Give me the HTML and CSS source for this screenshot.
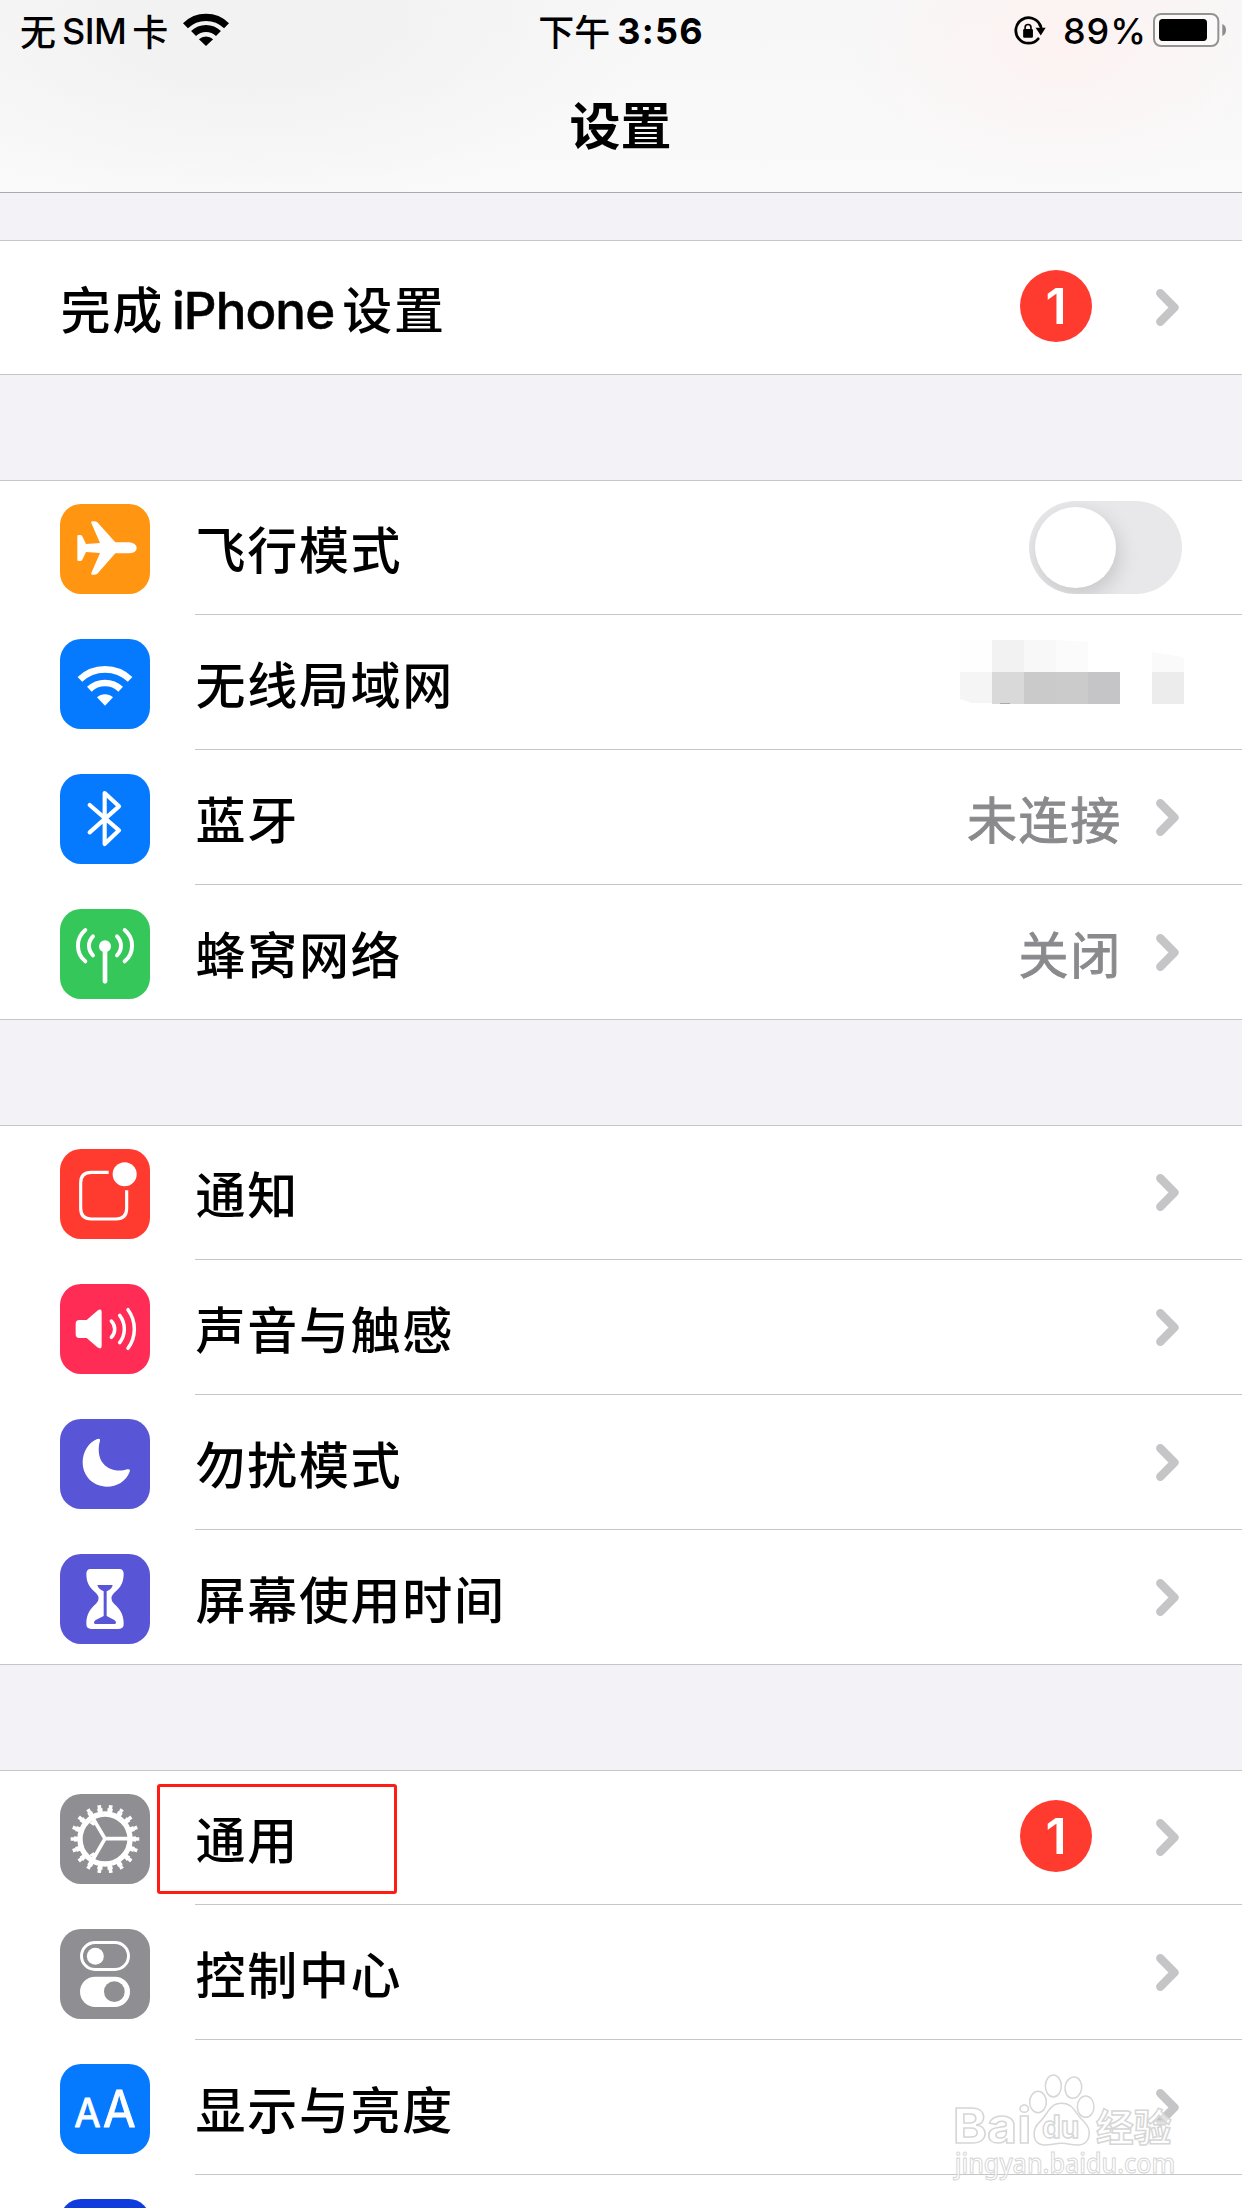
FILE: index.html
```html
<!DOCTYPE html>
<html lang="zh-CN">
<head>
<meta charset="utf-8">
<title>设置</title>
<link rel="stylesheet" href="styles.css">
</head>
<body>
<svg class="defs" aria-hidden="true">
  <symbol id="chevron" viewBox="0 0 23 37"><path d="M4.3 4.3 18.4 18.5 4.3 32.7" fill="none" stroke="#c5c5c7" stroke-width="8.4" stroke-linecap="round" stroke-linejoin="round"/></symbol>
</svg>
<div class="screen">
  <header class="header">
    <div class="status">
      <div class="status-left">
        <span class="cjk">无</span><span class="sim">SIM</span><span class="cjk">卡</span>
        <svg class="status-wifi" viewBox="0 0 136 98"><g fill="none" stroke="#000" stroke-width="21"><path d="M7 38A87 87 0 0 1 129 38"/><path d="M31 61A53 53 0 0 1 105 61"/></g><path d="M47 78A30 30 0 0 1 89 78L68 98Z"/></svg>
      </div>
      <div class="status-time"><span class="cjk">下午</span><span class="clock">3:56</span></div>
      <div class="status-right">
        <svg class="status-lock" viewBox="0 0 98 90"><path d="M80 27A39 39 0 1 0 74 69" fill="none" stroke="#000" stroke-width="8.5" stroke-linecap="round"/><path d="M66 35H97L82 59Z"/><path d="M78 24Q84 32 84 40" fill="none" stroke="#000" stroke-width="8"/><rect x="28" y="39" width="30" height="27" rx="4"/><path d="M34 42V34Q34 25 43 25T52 34V42" fill="none" stroke="#000" stroke-width="5"/></svg>
        <span class="percent">89%</span>
        <svg class="status-battery" viewBox="0 0 219 102"><rect x="3" y="3" width="193" height="96" rx="21" fill="#fff" fill-opacity=".4" stroke="#939393" stroke-width="6"/><rect x="18" y="18" width="144" height="66" rx="11"/><path d="M208 33Q219 38 219 51T208 69Z" fill="#8d8d8d"/></svg>
      </div>
    </div>
    <h1 class="title">设置</h1>
  </header>

  <main>
    <section class="group">
      <div class="row"><div class="row-body"><span class="label">完成<span class="latin">iPhone</span>设置</span><span class="badge">1</span><svg class="chevron"><use href="#chevron"/></svg></div></div>
    </section>

    <section class="group">
      <div class="row">
        <svg class="icon orange" viewBox="0 0 270 270"><path fill="#fff" d="M166 115H208Q230 118 230 132Q230 147 208 148H166L112 209Q109 212 102 212H96Q92 212 94 207L120 147 78 144 67 167Q65 171 60 171H55Q52 171 52 167V97Q52 93 55 93H60Q65 93 67 97L78 120 120 117 94 57Q92 52 96 52H102Q109 52 112 55Z"/></svg>
        <div class="row-body"><span class="label">飞行模式</span><span class="toggle"></span></div>
      </div>
      <div class="row">
        <svg class="icon blue" viewBox="0 0 270 270"><g fill="none" stroke="#fff" stroke-width="20"><path d="M59.7 121.2A109 109 0 0 1 210.3 121.2"/><path d="M88 150.8A68 68 0 0 1 182 150.8"/></g><path fill="#fff" d="M111 175A35 35 0 0 1 159 175L135 200Z"/></svg>
        <div class="row-body"><span class="label">无线局域网</span>
          <svg class="mosaic" viewBox="0 0 224 64"><path fill="#fefefe" d="M0 0H32V32H0z"/><path fill="#f2f2f2" d="M32 0H64V32H32z"/><path fill="#f8f8f8" d="M64 0H96V32H64z"/><path fill="#fbfbfb" d="M96 0 128 2V32H96z"/><path fill="#f5f5f5" d="M0 32H32V63H12L0 59z"/><path fill="#d9d9d9" d="M32 32H64V64H32z"/><path fill="#cacaca" d="M64 32H96V64H64z"/><path fill="#cbcbcb" d="M96 32H128V64H96z"/><path fill="#c5c5c7" d="M128 32H160V64H128z"/><path fill="#fafafa" d="M192 12 224 17V32H192z"/><path fill="#ececec" d="M192 32H224V64H192z"/><path fill="#aaa" d="M40 63H50V64H40z"/></svg>
        </div>
      </div>
      <div class="row">
        <svg class="icon blue" viewBox="0 0 270 270"><path fill="none" stroke="#fff" stroke-width="12.5" stroke-linecap="round" stroke-linejoin="round" d="M89 93 177 169 134 210V57L177 97 89 175"/></svg>
        <div class="row-body"><span class="label">蓝牙</span><span class="value">未连接</span><svg class="chevron"><use href="#chevron"/></svg></div>
      </div>
      <div class="row">
        <svg class="icon green" viewBox="0 0 270 270"><g fill="none" stroke="#fff" stroke-width="12" stroke-linecap="round"><path d="M76 63A61 61 0 0 0 76 157M194 63A61 61 0 0 1 194 157"/><path d="M99 82A40 40 0 0 0 99 139M171 82A40 40 0 0 1 171 139"/><path stroke-width="14" d="M135 112V217"/></g><circle cx="135" cy="112" r="18" fill="#fff"/></svg>
        <div class="row-body"><span class="label">蜂窝网络</span><span class="value">关闭</span><svg class="chevron"><use href="#chevron"/></svg></div>
      </div>
    </section>

    <section class="group">
      <div class="row">
        <svg class="icon red" viewBox="0 0 270 270"><path fill="none" stroke="#fff" stroke-width="9.5" d="M146 70H94Q62 70 62 102V178Q62 210 94 210H168Q200 210 200 178V124"/><circle cx="194" cy="76" r="36" fill="#fff"/></svg>
        <div class="row-body"><span class="label">通知</span><svg class="chevron"><use href="#chevron"/></svg></div>
      </div>
      <div class="row">
        <svg class="icon pink" viewBox="0 0 270 270"><path fill="#fff" d="M58 108H80L112 80Q125 72 125 84V186Q125 198 112 190L80 162H58Q47 162 47 150V120Q47 108 58 108Z"/><path fill="none" stroke="#fff" stroke-width="10.5" stroke-linecap="round" d="M154 111A35 35 0 0 1 154 160M179 94A67 67 0 0 1 179 176M204 77A98 98 0 0 1 204 193"/></svg>
        <div class="row-body"><span class="label">声音与触感</span><svg class="chevron"><use href="#chevron"/></svg></div>
      </div>
      <div class="row">
        <svg class="icon purple" viewBox="0 0 270 270"><path fill="#fff" d="M112 60Q122 57 120 66C115 80 112 115 131 135C150 156 180 158 202 151Q212 149 209 158C198 187 170 203 141 203C100 203 68 172 68 130C68 98 86 70 112 60Z"/></svg>
        <div class="row-body"><span class="label">勿扰模式</span><svg class="chevron"><use href="#chevron"/></svg></div>
      </div>
      <div class="row">
        <svg class="icon purple" viewBox="0 0 270 270"><path fill="#fff" d="M92 45H178Q192 45 191 62C190 90 178 103 162 117Q146 134 162 149C178 163 191 180 191 208Q192 225 176 225H94Q78 225 79 208C79 180 92 163 108 149Q124 134 108 117C92 103 80 90 79 62Q78 45 92 45Z"/><path fill="#5856d6" d="M112 93H158Q157 104 140 112V186L163 198Q168 202 168 206Q168 210 163 210H107Q102 210 102 206Q102 202 107 198L131 186V112Q114 104 112 93Z"/></svg>
        <div class="row-body"><span class="label">屏幕使用时间</span><svg class="chevron"><use href="#chevron"/></svg></div>
      </div>
    </section>

    <section class="group">
      <div class="row marked">
        <svg class="icon gray" viewBox="0 0 270 270"><g fill="none" stroke="#fff"><circle cx="135" cy="135" r="75" stroke-width="16"/><circle cx="135" cy="135" r="87" stroke-width="12" pathLength="360" stroke-dasharray="10 10" stroke-dashoffset="5"/><circle cx="135" cy="135" r="97.5" stroke-width="11" pathLength="360" stroke-dasharray="6.4 13.6" stroke-dashoffset="3.2"/><path stroke-width="11" d="M205 134H135L99 73M135 134 99 196"/></g><path fill="#fff" d="M88 87 106 76 112 88 100 95ZM88 183 106 194 112 182 100 175Z"/></svg>
        <div class="row-body"><span class="label">通用</span><span class="badge">1</span><svg class="chevron"><use href="#chevron"/></svg></div>
      </div>
      <div class="row">
        <svg class="icon gray" viewBox="0 0 270 270"><rect x="64.5" y="40.5" width="141" height="81" rx="40.5" fill="none" stroke="#fff" stroke-width="9"/><circle cx="106" cy="82" r="25.5" fill="#fff"/><rect x="60" y="143" width="150" height="91" rx="45.5" fill="#fff"/><circle cx="163" cy="188" r="31" fill="#8e8e93"/></svg>
        <div class="row-body"><span class="label">控制中心</span><svg class="chevron"><use href="#chevron"/></svg></div>
      </div>
      <div class="row">
        <svg class="icon blue" viewBox="0 0 270 270"><g class="glyphs"><text x="43" y="190" font-size="117" textLength="79" lengthAdjust="spacingAndGlyphs">A</text><text class="big" x="129" y="190" font-size="150" textLength="98" lengthAdjust="spacingAndGlyphs">A</text></g></svg>
        <div class="row-body"><span class="label">显示与亮度</span><svg class="chevron"><use href="#chevron"/></svg></div>
      </div>
      <div class="row"><div class="icon indigo"></div></div>
    </section>
  </main>

  <svg class="watermark" viewBox="90 940 690 330">
    <g class="wm-outline">
      <text class="wm-bold" x="98" y="1150" font-size="146" textLength="236" lengthAdjust="spacingAndGlyphs">Bai</text>
      <ellipse cx="354" cy="1027" rx="25" ry="32"/><ellipse cx="400" cy="979" rx="24" ry="33"/><ellipse cx="460" cy="984" rx="25" ry="32" transform="rotate(8 460 984)"/><ellipse cx="497" cy="1041" rx="25" ry="32"/>
      <path d="M425 1031C462 1031 465 1062 490 1084C520 1112 510 1155 475 1156C455 1157 445 1151 425 1151S390 1157 372 1156C338 1154 332 1112 360 1086C385 1062 388 1031 425 1031Z"/>
      <text class="wm-bold" x="366" y="1135" font-size="92" textLength="112" lengthAdjust="spacingAndGlyphs">du</text>
      <text class="wm-cjk" x="528" y="1143" font-size="113">经验</text>
      <text class="wm-url" x="104" y="1240" font-size="80" textLength="662" lengthAdjust="spacingAndGlyphs">jingyan.baidu.com</text>
    </g>
  </svg>
</div>
</body>
</html>
```
FILE: styles.css
```css
*, *::before, *::after { box-sizing: border-box; }
html, body { margin: 0; height: 2208px; overflow: hidden; }
body {
  background: #f2f2f7;
  color: #000;
  font: 500 51px/72px Inter, "Noto Sans CJK SC", sans-serif;
}
.defs { display: none; }
.screen { position: relative; width: 1242px; height: 2208px; overflow: hidden; }

.header {
  height: 193px;
  border-bottom: 1px solid #a9a9ae;
  background:
    radial-gradient(ellipse 220px 150px at 1065px 40px, rgba(255, 241, 240, .75), rgba(255, 241, 240, 0)),
    radial-gradient(ellipse 400px 190px at 250px 20px, #f2f2f2 30%, rgba(242, 242, 242, 0)),
    linear-gradient(#f7f7f7, #fafafb);
}
.status {
  display: grid;
  grid-template-columns: 1fr auto 1fr;
  align-items: center;
  height: 62px;
  padding: 0 16px 0 20px;
  font-size: 36px;
  line-height: 62px;
}
.status .cjk { margin-top: -2px; font-family: "Noto Sans CJK SC", sans-serif; }
.status-left, .status-time, .status-right { display: flex; align-items: center; }
.status-left { gap: 6px; }
.status-right { justify-content: flex-end; }
.sim { letter-spacing: -.6px; }
.status-wifi { width: 46px; height: 33px; margin-left: 9px; margin-top: -3px; }
.status-time { margin-left: -4px; }
.clock { margin-left: 7px; font-weight: 700; letter-spacing: 1.2px; }
.status-lock { width: 32px; height: 30px; margin-right: 17px; }
.percent { margin-right: 6px; letter-spacing: 1px; }
.status-battery { width: 73px; height: 34px; margin-top: -2px; }
.title {
  margin: 24px 0 0;
  text-align: center;
  text-indent: -1px;
  font: 700 51px/74px "Noto Sans CJK SC", sans-serif;
}

main { display: flex; flex-direction: column; gap: 105px; padding-top: 47px; }
.group { background: #fff; box-shadow: inset 0 1px #c6c6c8, inset 0 -1px #c6c6c8; }
.row { position: relative; display: flex; height: 135px; padding-left: 60px; }
.row-body {
  flex: 1;
  display: flex;
  align-items: center;
  padding: 0 63px 0 0;
  border-bottom: 1px solid #c6c6c8;
}
.icon + .row-body { margin-left: 45px; }
.group .row:last-child .row-body { border-bottom-color: transparent; }
.icon { flex: none; width: 90px; height: 90px; margin-top: 24px; border-radius: 21px; }
.orange { background: #ff9510; }
.blue { background: #067aff; }
.green { background: #35c759; }
.red { background: #ff3b30; }
.pink { background: #ff2d55; }
.purple { background: #5856d6; }
.gray { background: #8e8e93; }
.indigo { background: #0f3ddd; }
.label, .value {
  font-family: "Noto Sans CJK SC", sans-serif;
  font-size: 50px;
  letter-spacing: 1.7px;
}
.label { flex: 1; padding-left: .5px; }
.latin { margin: 0 8px 0 8px; font: 500 51px/1 Inter, sans-serif; letter-spacing: -.9px; -webkit-text-stroke: .5px #000; }
.value { margin: 0 34px 0 0; color: #8a8a8d; font-weight: 400; -webkit-text-stroke: .9px #8a8a8d; }
.chevron { flex: none; width: 23px; height: 37px; margin-top: 1px; }
.badge {
  width: 72px;
  height: 72px;
  margin: -2px 64px 0 0;
  border-radius: 50%;
  background: #ff3b30;
  color: #fff;
  font-size: 50px;
  font-weight: 600;
  text-align: center;
}
.toggle {
  width: 153px;
  height: 93px;
  margin-right: -3px;
  padding: 6px;
  border-radius: 47px;
  background: #e8e8ea;
  overflow: hidden;
}
.toggle::before {
  content: "";
  display: block;
  width: 81px;
  height: 81px;
  border-radius: 50%;
  background: #fff;
  box-shadow: 3px 7px 20px rgba(0, 0, 0, .15);
}
.mosaic { width: 224px; height: 64px; margin: -20px -5px 0 0; }
.glyphs { fill: #fff; stroke: #fff; stroke-width: 3; stroke-linejoin: round; font-family: Inter, sans-serif; font-weight: 400; }
.glyphs .big { stroke-width: 3; }

.marked::after {
  content: "";
  position: absolute;
  left: 157px;
  top: 14px;
  width: 240px;
  height: 110px;
  border: 3px solid #ff1c14;
  border-radius: 3px;
}
.watermark { position: absolute; left: 950px; top: 2073px; width: 230px; height: 110px; overflow: visible; }
.wm-outline { fill: rgba(255, 255, 255, .5); stroke: #d6d6d6; stroke-width: 4.5; }
.wm-bold { font-family: Inter, sans-serif; font-weight: 700; }
.wm-cjk { font-family: "Noto Sans CJK SC", sans-serif; font-weight: 700; }
.wm-url { font-family: "Noto Sans", sans-serif; font-weight: 500; stroke-width: 3; }
```
